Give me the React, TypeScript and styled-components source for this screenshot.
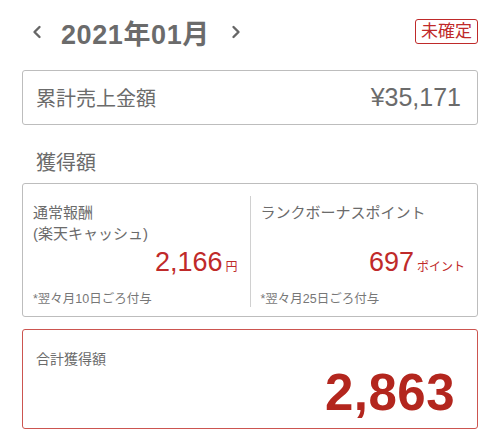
import React from 'react'
import styled, { createGlobalStyle } from 'styled-components'

const GlobalStyle = createGlobalStyle`
  html, body {
    margin: 0;
    padding: 0;
    background: #ffffff;
  }
  body {
    font-family: "Liberation Sans", "Noto Sans CJK JP", sans-serif;
    color: #666;
  }
`

const red = '#bf2a2a'

const Page = styled.div`
  width: 500px;
  height: 437px;
  box-sizing: border-box;
  padding: 17px 22px 0 22px;
  display: flex;
  flex-direction: column;
`

const Header = styled.div`
  display: flex;
  align-items: center;
  justify-content: space-between;
  height: 30px;
`

const MonthNav = styled.div`
  display: flex;
  align-items: center;
  padding-left: 10px;
`

const Arrow = styled.button`
  background: none;
  border: none;
  padding: 0;
  display: flex;
  align-items: center;
  color: #666;
  cursor: pointer;
`

const Month = styled.div`
  font-size: 27px;
  font-weight: 700;
  color: #6b6b6b;
  margin: 0 21px 0 19px;
  letter-spacing: 0.6px;
`

const Badge = styled.div`
  border: 1.5px solid ${red};
  border-radius: 3px;
  color: ${red};
  font-size: 17px;
  line-height: 21px;
  padding: 1px 5px;
  margin-top: -2px;
`

const Card = styled.div<{ $accent?: boolean }>`
  border: 1.5px solid ${(p) => (p.$accent ? '#cc5550' : '#bdbdbd')};
  border-radius: 3px;
  box-sizing: border-box;
`

const TotalSales = styled(Card)`
  margin-top: 23px;
  height: 55px;
  display: flex;
  align-items: center;
  justify-content: space-between;
  padding: 0 16px 0 13px;
`

const SalesLabel = styled.span`
  font-size: 20px;
  color: #6b6b6b;
`

const SalesValue = styled.span`
  font-size: 25px;
  color: #6b6b6b;
`

const SectionTitle = styled.div`
  font-size: 20px;
  color: #6b6b6b;
  margin: 22px 0 0 14px;
  height: 36px;
`

const Earnings = styled(Card)`
  height: 134px;
  display: grid;
  grid-template-columns: 1fr 1px 1fr;
  padding: 12px 0;
`

const Divider = styled.div`
  background: #d0d0d0;
`

const Column = styled.div`
  display: flex;
  flex-direction: column;
  padding: 6px 12px 0 10px;
`

const ColumnLabel = styled.div`
  font-size: 15px;
  line-height: 21px;
  color: #6b6b6b;
  height: 43px;
`

const Amount = styled.div`
  display: flex;
  align-items: baseline;
  justify-content: flex-end;
  color: ${red};
  margin-top: 2px;
`

const AmountNumber = styled.span`
  font-size: 27px;
`

const AmountUnit = styled.span`
  font-size: 12px;
  margin-left: 3px;
`

const Note = styled.div`
  font-size: 12.5px;
  color: #777;
  margin-top: 10px;
`

const Total = styled(Card)`
  margin-top: 12px;
  height: 100px;
  padding: 18px 22px 0 13px;
  display: flex;
  flex-direction: column;
`

const TotalLabel = styled.div`
  font-size: 14px;
  color: #6b6b6b;
`

const TotalValue = styled.div`
  align-self: flex-end;
  font-size: 51px;
  font-weight: 700;
  color: #b3261e;
  margin-top: -5px;
  letter-spacing: 0.5px;
`

const Chevron = ({ dir }: { dir: 'left' | 'right' }) => (
  <svg width="10" height="14" viewBox="0 0 10 14">
    <path
      d={dir === 'left' ? 'M7.5 2 L2.5 7 L7.5 12' : 'M2.5 2 L7.5 7 L2.5 12'}
      fill="none"
      stroke="#666"
      strokeWidth="2.4"
      strokeLinecap="round"
      strokeLinejoin="round"
    />
  </svg>
)

const App: React.FC = () => {
  return (
    <>
      <GlobalStyle />
      <Page>
        <Header>
          <MonthNav>
            <Arrow>
              <Chevron dir="left" />
            </Arrow>
            <Month>2021年01月</Month>
            <Arrow>
              <Chevron dir="right" />
            </Arrow>
          </MonthNav>
          <Badge>未確定</Badge>
        </Header>

        <TotalSales>
          <SalesLabel>累計売上金額</SalesLabel>
          <SalesValue>¥35,171</SalesValue>
        </TotalSales>

        <SectionTitle>獲得額</SectionTitle>

        <Earnings>
          <Column>
            <ColumnLabel>
              通常報酬
              <br />
              (楽天キャッシュ)
            </ColumnLabel>
            <Amount>
              <AmountNumber>2,166</AmountNumber>
              <AmountUnit>円</AmountUnit>
            </Amount>
            <Note>*翌々月10日ごろ付与</Note>
          </Column>
          <Divider />
          <Column>
            <ColumnLabel>ランクボーナスポイント</ColumnLabel>
            <Amount>
              <AmountNumber>697</AmountNumber>
              <AmountUnit>ポイント</AmountUnit>
            </Amount>
            <Note>*翌々月25日ごろ付与</Note>
          </Column>
        </Earnings>

        <Total $accent>
          <TotalLabel>合計獲得額</TotalLabel>
          <TotalValue>2,863</TotalValue>
        </Total>
      </Page>
    </>
  )
}

export default App
